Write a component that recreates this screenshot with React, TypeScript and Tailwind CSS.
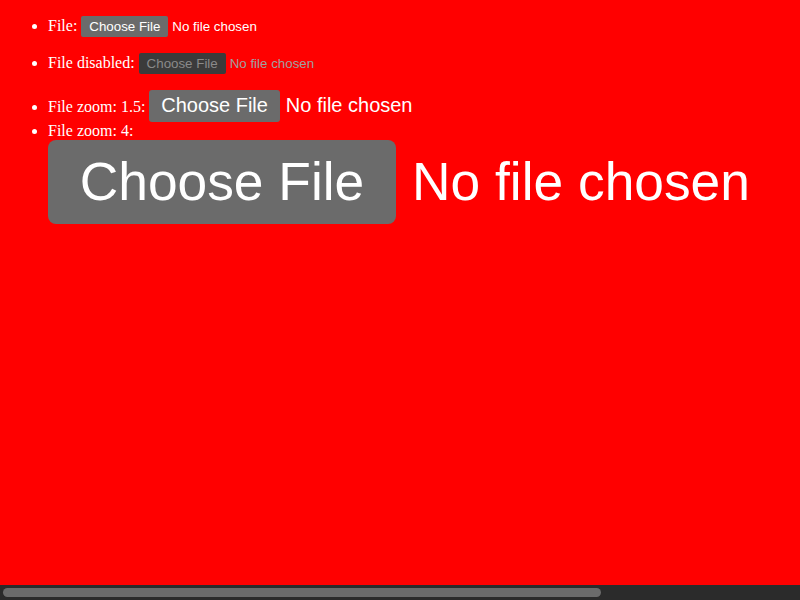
import React from 'react';

const FileInput: React.FC<{ disabled?: boolean; zoom?: string }> = ({ disabled, zoom = '' }) => (
  <span
    className={`inline-block w-[253px] whitespace-nowrap font-['Liberation_Sans',Arial,sans-serif] text-[13.333px] leading-normal ${zoom} ${
      disabled ? 'text-[#a0a0a0]' : 'text-white'
    }`}
  >
    <span
      className={`mr-1 inline-block h-[21px] w-[87px] rounded-[2px] text-center leading-[21px] ${
        disabled ? 'bg-[#3b3b3b] text-[#8a8a8a]' : 'bg-[#6b6b6b] text-white'
      }`}
    >
      Choose File
    </span>
    No file chosen
  </span>
);

export default function App() {
  return (
    <div className="flex h-screen w-screen flex-col bg-[#ff0000]">
      <div className="flex-1 overflow-hidden">
        <ul className="my-4 list-disc pl-12 font-['Liberation_Serif','Times_New_Roman',serif] text-[16px] leading-[normal] text-white">
          <li className="mb-4">
            File: <FileInput />
          </li>
          <li className="mb-4">
            File disabled: <FileInput disabled />
          </li>
          <li>
            File zoom: 1.5: <FileInput zoom="[zoom:1.5]" />
          </li>
          <li className="w-[1020px]">
            File zoom: 4:
            <br />
            <FileInput zoom="[zoom:4]" />
          </li>
        </ul>
      </div>
      {/* horizontal scrollbar */}
      <div className="h-[15px] shrink-0 bg-[#2b2b2b] pt-[3px] pl-[3px]">
        <div className="h-[9px] w-[598px] rounded-full bg-[#6b6b6b]" />
      </div>
    </div>
  );
}
